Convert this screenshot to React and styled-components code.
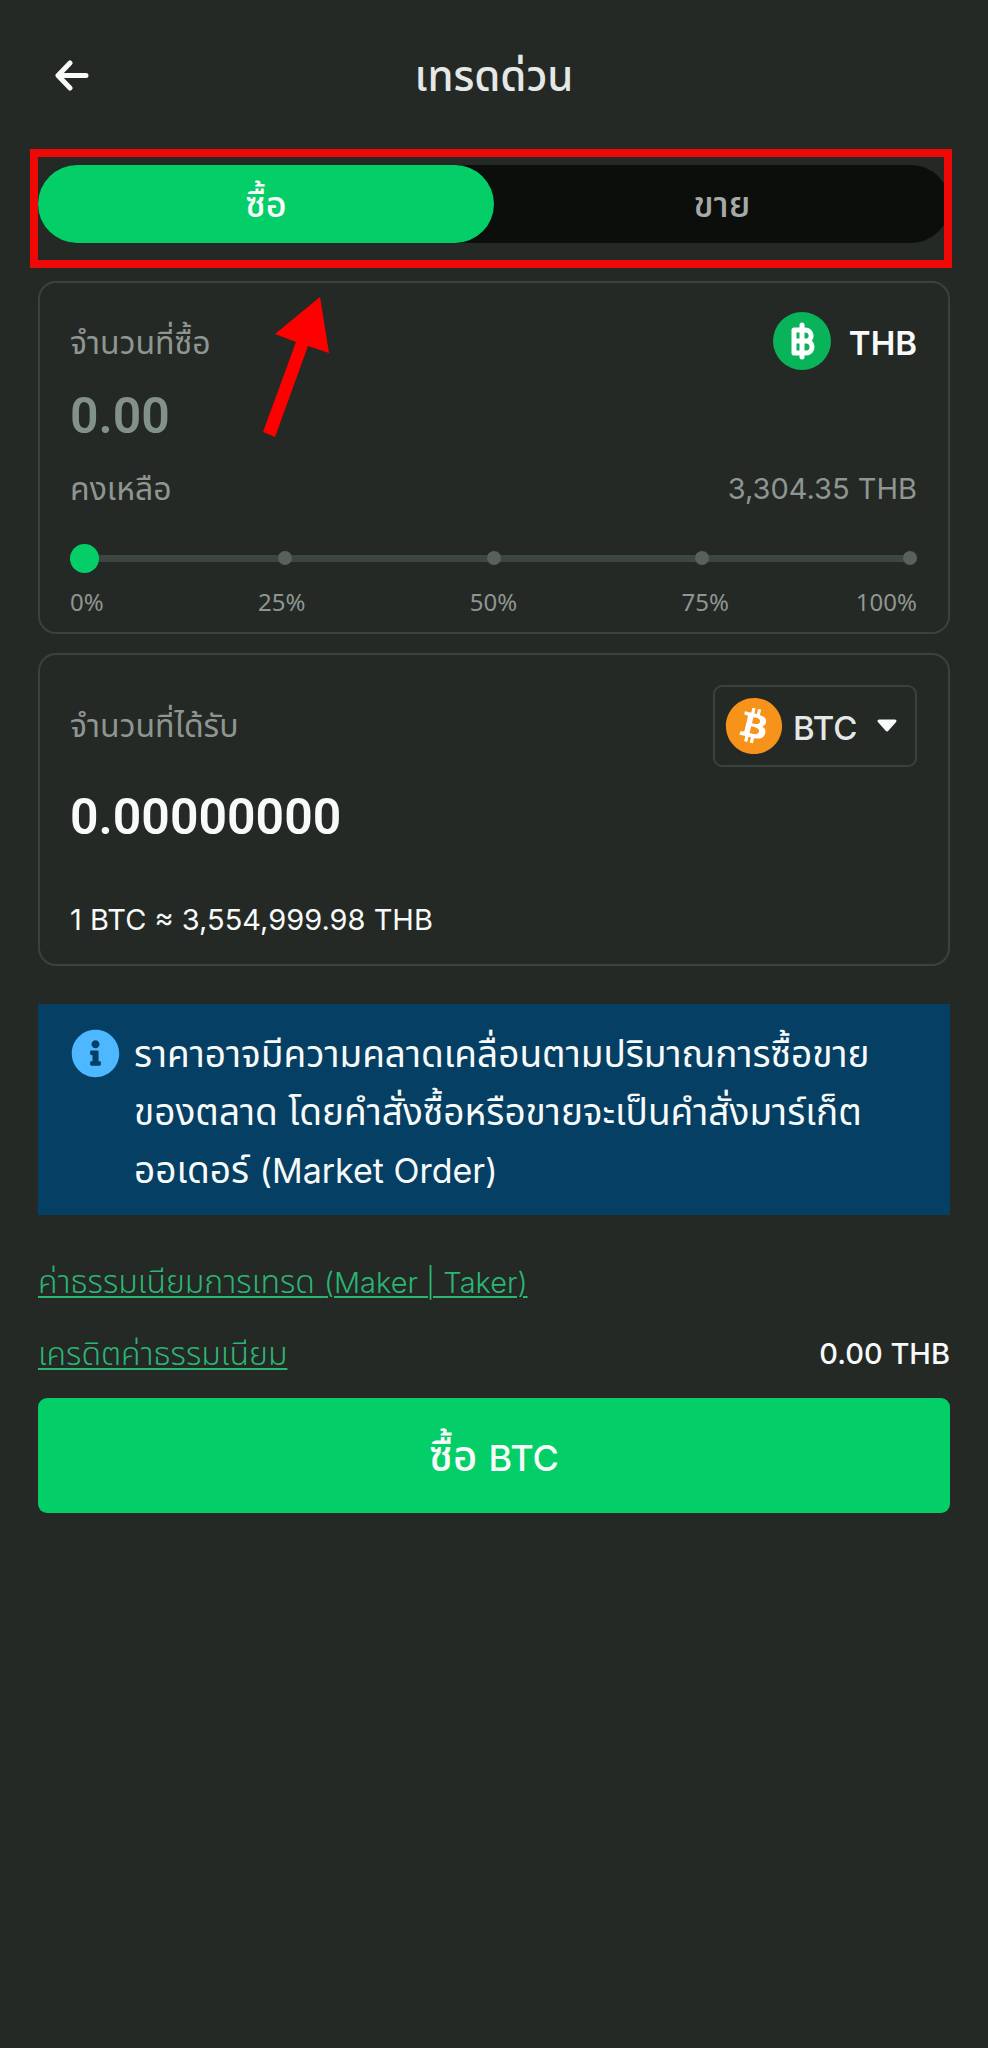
import React, { useState } from "react";
import styled, { createGlobalStyle } from "styled-components";
import { FaBitcoin, FaInfoCircle } from "react-icons/fa";

const GlobalStyle = createGlobalStyle`
  * {
    box-sizing: border-box;
  }
  body {
    margin: 0;
    background: #242926;
    color: #f7faf8;
    font-family: Inter, "Noto Sans Thai", "Noto Sans", sans-serif;
    font-size: 29px;
    line-height: 40px;
  }
  button, input, select {
    font-family: inherit;
    color: inherit;
  }
`;

const STEPS = ["0%", "25%", "50%", "75%", "100%"];

export default function App() {
  const [side, setSide] = useState("buy");
  const [percent, setPercent] = useState(0);

  return (
    <Page>
      <GlobalStyle />
      <Header>
        <BackButton aria-label="ย้อนกลับ">
          <svg width="36" height="32" viewBox="0 0 36 32" fill="none" stroke="#f7faf8" strokeWidth="5" strokeLinecap="round" strokeLinejoin="round">
            <path d="M16 3L4 15.500L16 28M5 15.500H32" />
          </svg>
        </BackButton>
        <Title>เทรดด่วน</Title>
      </Header>

      <TabArea>
        <Tabs>
          <Tab $active={side === "buy"} onClick={() => setSide("buy")}>ซื้อ</Tab>
          <Tab $active={side === "sell"} onClick={() => setSide("sell")}>ขาย</Tab>
        </Tabs>
        <Highlight />
        <Pointer width="68" height="142" viewBox="0 0 68 142">
          <path d="M58 1L67 57L46 50L13 141L1 136L34 46L13 38Z" fill="#ff0000" />
        </Pointer>
      </TabArea>

      <SpendCard>
        <SpendRow>
          <Label htmlFor="spend">จำนวนที่ซื้อ</Label>
          <Coin>
            <svg width="58" height="58" viewBox="0 0 58 58" fill="none" stroke="#fff" strokeWidth="5" strokeLinecap="round" strokeLinejoin="round">
              <circle cx="29" cy="29" r="29" fill="#09b359" stroke="none" />
              <path d="M21 18H32C40 18 40 29 33 29H21M33 29C41 29 41 41 33 41H21V18M29 13V45" />
            </svg>
            <CoinName>THB</CoinName>
          </Coin>
        </SpendRow>
        <AmountInput id="spend" placeholder="0.00" inputMode="decimal" />
        <BalanceRow>
          <ThaiText>คงเหลือ</ThaiText>
          <span>3,304.35 THB</span>
        </BalanceRow>
        <SliderBox>
          <Dots>
            {STEPS.map((step) => <Dot key={step} />)}
          </Dots>
          <Slider
            type="range"
            aria-label="คงเหลือ"
            min="0"
            max="100"
            value={percent}
            onChange={(e) => setPercent(e.target.value)}
          />
        </SliderBox>
        <StepLabels>
          {STEPS.map((step) => <span key={step}>{step}</span>)}
        </StepLabels>
      </SpendCard>

      <ReceiveCard>
        <ReceiveRow>
          <Label htmlFor="receive">จำนวนที่ได้รับ</Label>
          <CoinPicker>
            <BitcoinIcon />
            <CoinSelect aria-label="BTC">
              <option>BTC</option>
            </CoinSelect>
            <svg width="20" height="14" viewBox="0 0 20 14">
              <path d="M2 2H18L10 11Z" fill="#f7faf8" stroke="#f7faf8" strokeWidth="3" strokeLinejoin="round" />
            </svg>
          </CoinPicker>
        </ReceiveRow>
        <ReceiveInput id="receive" defaultValue="0.00000000" inputMode="decimal" />
        <Rate>1 BTC ≈ 3,554,999.98 THB</Rate>
      </ReceiveCard>

      <Notice>
        <NoticeIcon />
        <NoticeText>
          ราคาอาจมีความคลาดเคลื่อนตามปริมาณการซื้อขาย<br />
          ของตลาด โดยคำสั่งซื้อหรือขายจะเป็นคำสั่งมาร์เก็ต<br />
          ออเดอร์ <Latin $size={34}>(Market Order)</Latin>
        </NoticeText>
      </Notice>

      <Fees>
        <FeeRow>
          <FeeLink href="#fees">
            ค่าธรรมเนียมการเทรด <Latin $size={29}>(Maker | Taker)</Latin>
          </FeeLink>
        </FeeRow>
        <FeeRow>
          <FeeLink href="#credit">เครดิตค่าธรรมเนียม</FeeLink>
          <FeeValue>0.00 THB</FeeValue>
        </FeeRow>
      </Fees>
      <SubmitButton>
        ซื้อ <Latin $size={36}>BTC</Latin>
      </SubmitButton>
    </Page>
  );
}

const Page = styled.main`
  min-height: 100vh;
  padding: 46px 38px;
`;

const Header = styled.header`
  display: grid;
  grid-template-columns: 60px 1fr 60px;
  align-items: center;
  height: 60px;
`;

const BackButton = styled.button`
  display: flex;
  padding: 0 0 0 16px;
  border: none;
  background: none;
  cursor: pointer;
`;

const Title = styled.h1`
  margin: 0;
  font-size: 42px;
  font-weight: 500;
  line-height: 60px;
  text-align: center;
  color: #e4e8e6;
`;

/* Thai glyphs run small next to Inter, so Latin parts step down a size */
const Latin = styled.span`
  font-size: ${(p) => p.$size}px;
`;

const ThaiText = styled.span`
  font-size: 32px;
`;

const TabArea = styled.div`
  position: relative;
  margin-top: 59px;
`;

const Tabs = styled.div`
  display: flex;
  height: 78px;
  border-radius: 39px;
  background: #0b0e0b;
`;

const Tab = styled.button`
  flex: 1;
  padding: 4px 0 0;
  border: none;
  border-radius: 39px;
  background: ${(p) => (p.$active ? "#04ce67" : "transparent")};
  color: ${(p) => (p.$active ? "#f7faf8" : "#a5aaa7")};
  font-size: 36px;
  font-weight: 500;
  cursor: pointer;
`;

const Highlight = styled.div`
  position: absolute;
  top: -16px;
  right: -2px;
  bottom: -25px;
  left: -8px;
  border: 8px solid #ee0806;
  pointer-events: none;
`;

const Pointer = styled.svg`
  position: absolute;
  top: 131px;
  left: 224px;
  pointer-events: none;
`;

const Card = styled.section`
  border: 2px solid #3b423e;
  border-radius: 18px;
`;

const SpendCard = styled(Card)`
  margin-top: 38px;
  padding: 29px 31px 14px 30px;
`;

const ReceiveCard = styled(Card)`
  margin-top: 19px;
  padding: 30px 31px 24px 30px;
`;

const Row = styled.div`
  display: flex;
  align-items: center;
  justify-content: space-between;
`;

const SpendRow = styled(Row)`
  height: 62px;
`;

const ReceiveRow = styled(Row)`
  height: 82px;
`;

const BalanceRow = styled(Row)`
  margin-top: 23px;
  color: #8f9692;
`;

const Label = styled.label`
  font-size: 32px;
  color: #8f9692;
`;

const Coin = styled.div`
  display: flex;
  align-items: center;
  gap: 18px;

  svg {
    align-self: flex-start;
  }
`;

const CoinName = styled.span`
  font-size: 33px;
  font-weight: 600;
  line-height: 62px;
`;

const AmountInput = styled.input`
  display: block;
  width: 100%;
  height: 60px;
  margin-top: 12px;
  padding: 0;
  border: none;
  outline: none;
  background: none;
  font-family: Roboto, sans-serif;
  font-size: 50px;
  font-weight: 600;

  &::placeholder {
    color: #82918a;
    opacity: 1;
  }
`;

const ReceiveInput = styled(AmountInput)`
  margin-top: 20px;
`;

const SliderBox = styled.div`
  display: grid;
  align-items: center;
  height: 30px;
  margin-top: 34px;

  > * {
    grid-area: 1 / 1;
  }
`;

const Dots = styled.div`
  display: flex;
  justify-content: space-between;
  align-items: center;
  height: 7px;
  border-radius: 4px;
  background: #3e4641;
`;

const Dot = styled.span`
  width: 14px;
  height: 14px;
  border-radius: 50%;
  background: #59615d;
`;

const Slider = styled.input`
  width: 100%;
  height: 30px;
  margin: 0;
  appearance: none;
  background: none;
  cursor: pointer;

  &::-webkit-slider-thumb {
    appearance: none;
    width: 29px;
    height: 29px;
    border-radius: 50%;
    background: #04ce67;
  }
`;

const StepLabels = styled.div`
  display: grid;
  grid-template-columns: 1fr 2fr 2fr 2fr 1fr;
  margin-top: 13px;
  font-family: "Noto Sans", sans-serif;
  font-size: 24px;
  line-height: 32px;
  text-align: center;
  color: #8f9692;

  span:first-child {
    text-align: left;
  }
  span:last-child {
    text-align: right;
  }
`;

const CoinPicker = styled.div`
  display: flex;
  align-items: center;
  height: 82px;
  padding: 0 18px 0 10px;
  border: 2px solid #3b423e;
  border-radius: 9px;
`;

const BitcoinIcon = styled(FaBitcoin)`
  width: 58px;
  height: 58px;
  color: #f7931a;
  background: radial-gradient(circle, #fff 50%, transparent 52%);
`;

const CoinSelect = styled.select`
  width: 84px;
  margin-left: 10px;
  padding: 4px 0 0;
  border: none;
  outline: none;
  appearance: none;
  background: none;
  color: #e4e8e6;
  font-size: 33px;
  font-weight: 500;
  line-height: 40px;
`;

const Rate = styled.div`
  margin-top: 53px;
`;

const Notice = styled.div`
  display: flex;
  gap: 14px;
  margin-top: 38px;
  padding: 21px 33px 15px;
  background: #053f63;
`;

const NoticeIcon = styled(FaInfoCircle)`
  flex: none;
  width: 49px;
  height: 49px;
  margin-top: 4px;
  color: #4db8ff;
`;

const NoticeText = styled.p`
  margin: 0;
  font-size: 37px;
  line-height: 58px;
`;

const Fees = styled.div`
  display: flex;
  flex-direction: column;
  gap: 32px;
  margin-top: 47px;
`;

const FeeRow = styled(Row)`
  height: 40px;
`;

const FeeLink = styled.a`
  color: #2bb673;
  font-size: 32px;
  font-weight: 300;
  text-underline-offset: 3px;
  text-decoration-thickness: 2px;
`;

const FeeValue = styled.span`
  font-weight: 500;
`;

const SubmitButton = styled.button`
  width: 100%;
  height: 115px;
  margin-top: 24px;
  padding: 4px 0 0;
  border: none;
  border-radius: 9px;
  background: #04ce67;
  font-size: 42px;
  font-weight: 500;
  cursor: pointer;
`;
